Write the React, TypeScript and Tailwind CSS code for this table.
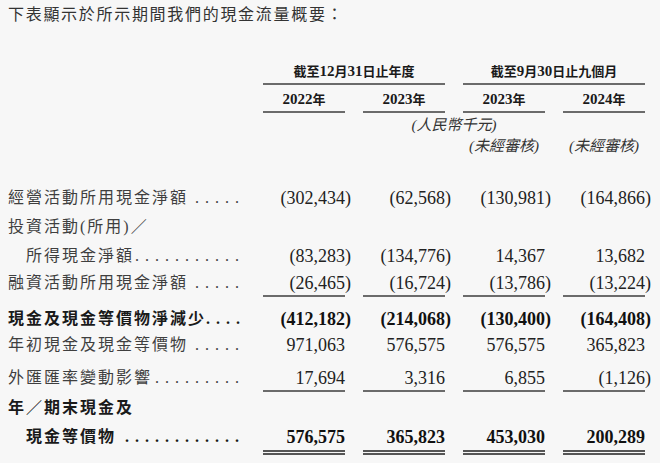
import React from 'react';

const cols = 'grid grid-cols-[237px_82px_82px_82px_82px] gap-x-[18px]';

type Line = 'none' | 'single' | 'double';

interface RowProps {
  label: React.ReactNode;
  values?: string[];
  indent?: boolean;
  bold?: boolean;
  dots?: number;
  h: string;
  pt?: string;
  line?: Line;
}

function Num({ v, bold }: { v: string; bold?: boolean }) {
  const neg = v.startsWith('(');
  return (
    <span className={`whitespace-nowrap text-[18px] leading-none ${bold ? 'font-bold text-[#111]' : 'text-[#222]'}`}>
      {neg ? v.slice(0, -1) : v}
      {neg && <span className="-mr-[6px]">)</span>}
    </span>
  );
}

function Row({ label, values, indent, bold, dots = 0, h, pt = '', line = 'none' }: RowProps) {
  const lineCls =
    line === 'single'
      ? 'border-b-2 border-[#6b6b6b]'
      : line === 'double'
      ? 'border-b-[5px] border-double border-[#555]'
      : '';
  const ghost =
    line === 'single' ? 'border-b-2 border-transparent' : line === 'double' ? 'border-b-[5px] border-transparent' : '';
  const tone = bold ? 'font-bold text-[#1a1a1a]' : 'text-[#3f3f3f]';

  return (
    <div className={`${cols} ${h}`}>
      <div className={`flex items-center ${pt} ${ghost}`}>
        <div className={`flex w-full items-baseline justify-between ${indent ? 'pl-[18px]' : ''}`}>
          <span className={`whitespace-nowrap text-[16px] leading-[20px] tracking-[2px] ${tone}`}>{label}</span>
          {dots > 0 && (
            <span className={`whitespace-nowrap text-[16px] tracking-[6px] ${tone}`}>{'.'.repeat(dots)}</span>
          )}
        </div>
      </div>
      {(values ?? ['', '', '', '']).map((v, i) => (
        <div key={i} className={`flex items-center justify-end ${pt} ${values ? lineCls : ''}`}>
          {v && <Num v={v} bold={bold} />}
        </div>
      ))}
    </div>
  );
}

export default function App() {
  return (
    <div className="h-[463px] w-[660px] overflow-hidden bg-[#f7f7f7] font-['Liberation_Serif','Noto_Sans_CJK_TC',serif]">
      <p className="pl-2 pt-[5px] text-[16px] leading-[20px] tracking-[1.7px] text-[#333]">
        下表顯示於所示期間我們的現金流量概要：
      </p>

      <div className="mt-[32px] pl-2">
        {/* Period headers */}
        <div className={`${cols} h-[25px]`}>
          <div />
          <div className="col-span-2 flex items-center justify-center border-b-2 border-[#6b6b6b] pt-[3px] font-bold text-[#1a1a1a]">
            <span className="text-[13px]">截至</span>
            <span className="text-[15px]">12</span>
            <span className="text-[13px]">月</span>
            <span className="text-[15px]">31</span>
            <span className="text-[13px]">日止年度</span>
          </div>
          <div className="col-span-2 flex items-center justify-center border-b-2 border-[#6b6b6b] pt-[3px] font-bold text-[#1a1a1a]">
            <span className="text-[13px]">截至</span>
            <span className="text-[15px]">9</span>
            <span className="text-[13px]">月</span>
            <span className="text-[15px]">30</span>
            <span className="text-[13px]">日止九個月</span>
          </div>
        </div>

        <div className={`${cols} h-[28px]`}>
          <div />
          {['2022', '2023', '2023', '2024'].map((y, i) => (
            <div
              key={i}
              className="flex items-center justify-center border-b-2 border-[#6b6b6b] pt-[6px] font-bold text-[#1a1a1a]"
            >
              <span className="text-[15px]">{y}</span>
              <span className="text-[13px]">年</span>
            </div>
          ))}
        </div>

        <div className={`${cols} h-[25px]`}>
          <div className="col-start-3 col-span-2 flex items-center justify-center pt-[4px] text-[15px] italic text-[#333]">
            (人民幣千元)
          </div>
        </div>

        <div className={`${cols} h-[22px]`}>
          <div className="col-start-4 flex items-center justify-center text-[15px] italic text-[#333]">(未經審核)</div>
          <div className="flex items-center justify-center text-[15px] italic text-[#333]">(未經審核)</div>
        </div>

        {/* Body */}
        <div className="mt-[26px]">
          <Row
            label="經營活動所用現金淨額"
            dots={5}
            h="h-[29px]"
            values={['(302,434)', '(62,568)', '(130,981)', '(164,866)']}
          />
          <Row label="投資活動(所用)／" h="h-[29px]" />
          <Row
            label="所得現金淨額"
            indent
            dots={11}
            h="h-[29px]"
            values={['(83,283)', '(134,776)', '14,367', '13,682']}
          />
          <Row
            label="融資活動所用現金淨額"
            dots={5}
            h="h-[27px]"
            line="single"
            values={['(26,465)', '(16,724)', '(13,786)', '(13,224)']}
          />
          <Row
            label="現金及現金等價物淨減少"
            bold
            dots={4}
            h="h-[35px]"
            pt="pt-[8px]"
            values={['(412,182)', '(214,068)', '(130,400)', '(164,408)']}
          />
          <Row
            label="年初現金及現金等價物"
            dots={5}
            h="h-[26px]"
            values={['971,063', '576,575', '576,575', '365,823']}
          />
          <Row
            label="外匯匯率變動影響"
            dots={9}
            h="h-[31px]"
            pt="pt-[8px]"
            line="single"
            values={['17,694', '3,316', '6,855', '(1,126)']}
          />
          <Row label="年／期末現金及" bold h="h-[34px]" pt="pt-[4px]" />
          <Row
            label="現金等價物"
            indent
            bold
            dots={12}
            h="h-[32px]"
            line="double"
            values={['576,575', '365,823', '453,030', '200,289']}
          />
        </div>
      </div>
    </div>
  );
}
